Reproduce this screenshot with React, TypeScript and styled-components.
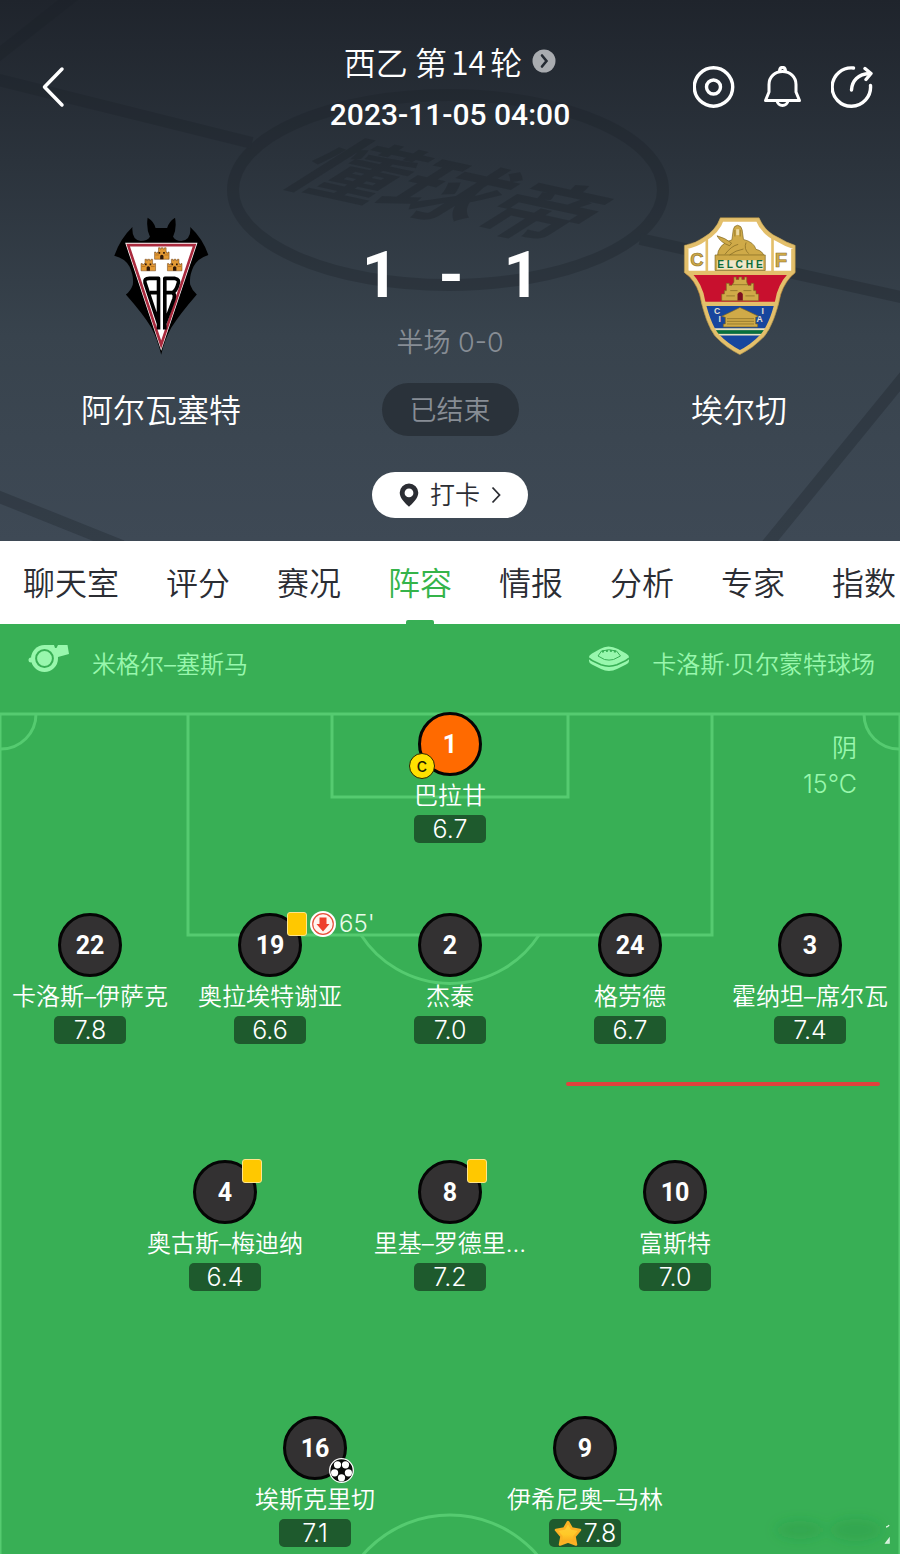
import React from "react";
import styled, { createGlobalStyle } from "styled-components";

const GlobalStyle = createGlobalStyle`
  *, *::before, *::after { box-sizing: border-box; }
  body {
    margin: 0;
    background: #38af55;
    font-family: Inter, "Noto Sans CJK SC", sans-serif;
    font-weight: 350;
    -webkit-font-smoothing: antialiased;
  }
  button { font: inherit; color: inherit; border: 0; padding: 0; background: none; cursor: pointer; }
  a { color: inherit; text-decoration: none; }
  h1, h2, p { margin: 0; font-size: inherit; font-weight: inherit; }
  svg { display: block; }
`;

const Page = styled.main`
  width: 100%;
  overflow: hidden;
`;

/* ---------- header ---------- */

const Header = styled.header`
  position: relative;
  padding: 42px 0 23px;
  color: #fff;
  background: linear-gradient(#1f242c 0%, #2b333c 30%, #38434d 62%, #3e4955 100%);
`;

const HeaderArt = styled.svg`
  position: absolute;
  inset: 0;
  width: 100%;
  height: 100%;
`;

const TopBar = styled.div`
  position: relative;
  display: grid;
  grid-template-columns: 1fr auto 1fr;
  align-items: center;
  padding: 0 27px 0 40px;
`;

const Round = styled.a`
  display: flex;
  align-items: center;
  justify-content: center;
  gap: 10px;
  font-size: 32px;
  line-height: 38px;
  font-family: "Noto Sans CJK SC", sans-serif;
`;

const RoundNumber = styled.span`
  padding: 0 4px;
`;

const Kickoff = styled.time`
  display: block;
  margin-top: 15px;
  font: 500 30px/40px Roboto, sans-serif;
  text-align: center;
`;

const Titles = styled.div`
  padding-right: 13px;
`;

const Actions = styled.div`
  display: flex;
  justify-content: flex-end;
  gap: 27px;
  padding-bottom: 4px;
`;

const Match = styled.section`
  position: relative;
  display: grid;
  grid-template-columns: 1fr 256px 1fr;
  margin-top: 82px;
`;

const Team = styled.div`
  display: flex;
  flex-direction: column;
  align-items: center;
  gap: 32px;
  font-size: 32px;
  line-height: 48px;
`;

const Center = styled.div`
  display: flex;
  flex-direction: column;
  align-items: center;
  padding-top: 27px;
`;

const Score = styled.div`
  display: flex;
  gap: 40px;
  padding-left: 2px;
  font: 700 64px/64px Roboto, sans-serif;
`;

const HalfTime = styled.p`
  margin-top: 17px;
  font-size: 27px;
  line-height: 36px;
  color: #878d95;
`;

const Status = styled.span`
  margin-top: 22px;
  padding: 3px 28px 0;
  border-radius: 27px;
  background: #2a323a;
  color: #878d95;
  font-size: 27px;
  line-height: 50px;
`;

const CheckIn = styled.button`
  display: flex;
  align-items: center;
  gap: 11px;
  height: 46px;
  margin-top: 36px;
  padding: 0 27px;
  border-radius: 23px;
  background: #fff;
  color: #2b2d33;
  font-size: 25px;
  line-height: 46px;
`;

/* ---------- tabs ---------- */

const Tabs = styled.nav`
  display: flex;
  gap: 47px;
  height: 83px;
  padding-left: 23px;
  background: #fff;
`;

const Tab = styled.a<{ $active?: boolean }>`
  position: relative;
  flex: none;
  padding-top: 2px;
  font-size: 32px;
  line-height: 81px;
  color: ${(p) => (p.$active ? "#35b44a" : "#2b2d33")};

  &::after {
    content: "";
    display: ${(p) => (p.$active ? "block" : "none")};
    position: absolute;
    bottom: 0;
    left: 50%;
    width: 28px;
    height: 4px;
    margin-left: -14px;
    border-radius: 2px 2px 0 0;
    background: #38af55;
  }
`;

/* ---------- pitch ---------- */

const Info = styled.div`
  display: flex;
  justify-content: space-between;
  height: 88px;
  padding: 20px 25px 0 28px;
  background: #38af55;
  color: #98f7ad;
`;

const InfoItem = styled.div`
  display: flex;
  align-items: flex-start;
  gap: 22px;
`;

const InfoText = styled.span`
  padding-top: 5px;
  font-size: 24px;
  line-height: 32px;
`;

const Pitch = styled.section`
  position: relative;
  padding-bottom: 7px;
  background: #38af55;
`;

const PitchLines = styled.svg`
  position: absolute;
  inset: 0;
  width: 100%;
  height: 100%;
`;

const Weather = styled.div`
  position: absolute;
  top: 18px;
  right: 43px;
  font-size: 25px;
  line-height: 36px;
  text-align: right;
  color: #98f7ad;
`;

const Row = styled.div<{ $gap: number }>`
  position: relative;
  display: flex;
  justify-content: center;
  padding-top: ${(p) => p.$gap}px;
`;

const Slot = styled.div<{ $share: number }>`
  flex: 0 0 ${(p) => p.$share}%;
  display: flex;
  flex-direction: column;
  align-items: center;
`;

const Shirt = styled.div<{ $keeper?: boolean }>`
  position: relative;
  width: 64px;
  height: 64px;
  border: 3px solid #050505;
  border-radius: 50%;
  background: ${(p) => (p.$keeper ? "#ff6a00" : "#333132")};
  color: #fff;
  font: 700 25px/60px Roboto, sans-serif;
  text-align: center;
`;

const Name = styled.div`
  max-width: 162px;
  margin-top: 4px;
  overflow: hidden;
  white-space: nowrap;
  text-overflow: ellipsis;
  color: #fff;
  font-size: 24px;
  line-height: 32px;
`;

const Rating = styled.div`
  display: flex;
  align-items: center;
  justify-content: center;
  gap: 2px;
  width: 72px;
  height: 28px;
  margin-top: 3px;
  border-radius: 5px;
  background: #1e5a2d;
  color: #fff;
  font-size: 25px;
  line-height: 28px;
  font-weight: 300;
`;

const Events = styled.div`
  position: absolute;
  top: -5px;
  left: 46px;
  display: flex;
  align-items: center;
  gap: 3px;
  height: 26px;
`;

const Card = styled.span`
  width: 20px;
  height: 24px;
  border: 1px solid #ffe58a;
  border-radius: 3px;
  background: #ffc800;
`;

const Minute = styled.span`
  color: #e9fbe9;
  font: 300 24px/26px Inter, sans-serif;
`;

const Captain = styled.span`
  position: absolute;
  top: 38px;
  left: -12px;
  width: 26px;
  height: 26px;
  border: 1px solid #2a2600;
  border-radius: 50%;
  background: #ffe100;
  color: #1c1a00;
  font: 400 19px/23px Inter, sans-serif;
`;

const Goal = styled.span`
  position: absolute;
  top: 39px;
  left: 43px;
`;

/* ---------- drawings ---------- */

const HeaderBackdrop = () => (
  <HeaderArt viewBox="0 0 900 541" preserveAspectRatio="xMidYMin slice" aria-hidden="true">
    <g fill="none" stroke="#1a2027" opacity="0.3" strokeWidth="12">
      <ellipse cx="448" cy="190" rx="215" ry="95" />
      <path d="M-5 79 252 143M640 239 905 298" />
      <path d="M78 -8-8 60M-8 494 122 546M908 372 766 546" />
    </g>
    <text
      transform="matrix(1.02 .22 -.95 .6 276 182)"
      fontSize="92"
      fontWeight="700"
      fontFamily="Noto Sans CJK SC, sans-serif"
      fill="#1a2027"
      fillOpacity="0.34"
    >
      懂球帝
    </text>
  </HeaderArt>
);

const Castle = ({ x, y }: { x: number; y: number }) => (
  <g transform={`translate(${x} ${y})`}>
    <path
      d="M0 13h4v3h5v-3h3V0h5v4h3V0h6v4h4V0h5v13h2v3h4v-3h3v22H0z"
      fill="#e39a35"
      stroke="#6b3c10"
      strokeWidth="1.5"
    />
    <path d="M17 35V24q5-6 10 0v11zM12 13h5v5h-5zM26 13h5v5h-5z" fill="#2b1508" />
    <path d="M2 22h11M30 22h11" stroke="#a8641c" strokeWidth="2" />
  </g>
);

const AlbaceteCrest = () => (
  <svg width="97" height="138" viewBox="70 35 290 418" role="img" aria-label="阿尔瓦塞特">
    <path
      d="M173 37Q192 48 197 68H232Q238 48 256 37 262 70 250 95 258 108 275 108 306 104 302 65 340 100 357 150 325 160 312 185 298 215 302 240 308 258 322 270 270 330 245 370 225 405 214 452 203 405 184 370 160 330 107 270 122 258 128 240 132 215 118 185 105 160 72 152 90 100 127 65 124 104 152 108 172 108 180 95 168 70 173 37z"
      fill="#000"
    />
    <path d="M105 113h219L214 440z" fill="#fff" />
    <path d="M114 120h201L214 422z" fill="#fff" stroke="#aa2a3e" strokeWidth="8" />
    <Castle x={194} y={128} />
    <Castle x={153} y={163} />
    <Castle x={233} y={163} />
    <g fill="none" stroke="#000" strokeWidth="11" strokeLinejoin="round">
      <path d="M206 376V221H178q-17 0-13 13L206 358M180 264h26" />
      <path d="M225 376V221h31q15 3 9 17-5 20-16 26h-24M249 264q8 5 4 18L226 356" />
    </g>
  </svg>
);

const ELCHE_SHIELD =
  "M162 37h117q17 42 58 60 26 16 52 24v82q-30 24-44 66-18 88-50 128-34 36-74 55-42-21-74-55-30-38-48-128-14-44-46-66v-82q34-6 58-24 38-22 51-60z";

const ElcheCrest = () => (
  <svg width="113" height="138" viewBox="50 35 340 418" role="img" aria-label="埃尔切">
    <defs>
      <clipPath id="shield">
        <path d={ELCHE_SHIELD} />
      </clipPath>
    </defs>
    <g clipPath="url(#shield)">
      <path d="M50 35h340v170H50z" fill="#fff" />
      <path d="M50 205h340v90H50z" fill="#c8102e" />
      <path d="M50 298h340v155H50z" fill="#17469e" />
      <path d="M50 372h340v7H50zM50 388h340v6H50z" fill="#e8e2c0" />
      <path d="M50 378h340v11H50z" fill="#08703a" />
      <path d="M50 204h340M50 298h340" stroke="#e3bf6b" strokeWidth="13" />
      <path d="M121 80v124M320 80v124" stroke="#e3bf6b" strokeWidth="8" />
    </g>
    <path d={ELCHE_SHIELD} fill="none" stroke="#e3bf6b" strokeWidth="25" clipPath="url(#shield)" />
    <path d={ELCHE_SHIELD} fill="none" stroke="#a98a3d" strokeWidth="2" />
    <g fill="#cfaa48" stroke="#7d6420" strokeWidth="2">
      <path d="M153 156q0-38 44-52l4-30q2-13 13-14 12 1 14 14l4 29q32 8 38 30 20 4 26 23z" />
      <path d="M190 122q-28-10-38-30 24 6 44 22z" />
      <path d="M146 150h152v47H146z" />
      <path d="M203 217h7v7h8v-7h9v7h8v-7h7v15l4 10h9v-6h8v22h7v10h8v21H166v-21h8v-10h6v-22h9v6h8l6-10z" />
      <path d="M166 336l35-17 20-10 22 10 35 17-9 3v20h6v9H171v-9h6v-20z" />
    </g>
    <path d="M152 166h140v28H152z" fill="#efe6c8" />
    <path d="M214 288v-20q8-12 16 0v20z" fill="#7d1020" />
    <path
      d="M176 148q20-26 40-30M190 150q18-14 42-18M240 112q-8 20 8 34M206 74v20M222 74v20M182 343h82M182 351h82M182 359h82M192 258h22M232 258h24M180 274h26M238 274h28M200 240h44"
      fill="none"
      stroke="#7d6420"
      strokeWidth="2"
    />
    <path d="M210 72h9v18h-9z" fill="#ecd9a0" />
    <g fontFamily="Liberation Sans, sans-serif" fontWeight="700" textAnchor="middle">
      <text x="91" y="183" fontSize="56" fill="#cfaa48" stroke="#8f7430" strokeWidth="2">C</text>
      <text x="346" y="187" fontSize="62" fill="#cfaa48" stroke="#8f7430" strokeWidth="2">F</text>
      <g fontSize="31" fill="#0d6b38">
        <text x="163" y="191">E</text>
        <text x="191" y="191">L</text>
        <text x="219" y="191">C</text>
        <text x="250" y="191">H</text>
        <text x="280" y="191">E</text>
      </g>
      <g fontSize="26" fill="#e6e0d0">
        <text x="152" y="329">C</text>
        <text x="160" y="352">I</text>
        <text x="290" y="329">I</text>
        <text x="281" y="352">A</text>
      </g>
    </g>
  </svg>
);

const BackIcon = () => (
  <svg width="26" height="42" viewBox="0 0 26 42" fill="none" stroke="#fff" strokeWidth="3.5">
    <path d="M22 3 4.500 21 22 39" strokeLinecap="round" strokeLinejoin="round" />
  </svg>
);

const RoundIcon = () => (
  <svg width="24" height="24" viewBox="0 0 24 24" aria-hidden="true">
    <circle cx="12" cy="12" r="11.500" fill="#a9acb0" />
    <path d="M10 6.500 14.500 12 10 17.500" fill="none" stroke="#252b33" strokeWidth="2.600" strokeLinecap="round" />
  </svg>
);

const TargetIcon = () => (
  <svg width="42" height="42" viewBox="0 0 42 42" fill="none" stroke="#fff" strokeWidth="3.400">
    <circle cx="20.500" cy="21" r="19.200" />
    <circle cx="20.500" cy="21" r="7" />
  </svg>
);

const BellIcon = () => (
  <svg width="42" height="42" viewBox="0 0 42 42" fill="none" stroke="#fff" strokeWidth="3" strokeLinejoin="round">
    <path d="M7 26V18.500C7 11 13 5.500 20.500 5.500S34 11 34 18.500V26l3.500 8.500h-34z" />
    <path d="M17.500 5.500c0-5.500 6-5.500 6 0M15 34.500c.5 6.500 10.500 6.500 11 0" />
  </svg>
);

const ShareIcon = () => (
  <svg width="42" height="42" viewBox="0 0 42 42" fill="none" stroke="#fff" strokeWidth="3.400" strokeLinecap="round">
    <path d="M22.500 2A19.200 19.200 0 1 0 39.500 19.500" />
    <path d="M20.500 24C21 15 27 8 38.500 7.500" />
    <path d="M34 2.500 40 7.500 35 13.500" strokeLinejoin="round" />
  </svg>
);

const PinIcon = () => (
  <svg width="20" height="24" viewBox="0 0 20 24" aria-hidden="true">
    <path
      fillRule="evenodd"
      fill="#2b2d33"
      d="M10 .5a9.300 9.300 0 0 1 9.300 9.300C19.300 15.500 13 21 10 23.800 7 21 .7 15.500.7 9.800A9.300 9.300 0 0 1 10 .5zm0 5a4.400 4.400 0 1 0 0 8.800 4.400 4.400 0 0 0 0-8.800z"
    />
  </svg>
);

const ChevronIcon = () => (
  <svg width="10" height="18" viewBox="0 0 10 18" fill="none" stroke="#2b2d33" strokeWidth="1.800">
    <path d="M1.500 1.500 8.500 9 1.500 16.500" />
  </svg>
);

const WhistleIcon = () => (
  <svg width="42" height="32" viewBox="0 0 42 32" aria-hidden="true">
    <g fill="#98f7ad">
      <circle cx="16.500" cy="14.500" r="13.500" />
      <path d="M16 1h10l1 3h1.500L30 1h9.500L41 10 30 13 26 21z" />
      <circle cx="3" cy="16" r="2.500" />
    </g>
    <circle cx="16.500" cy="14.500" r="8.400" fill="none" stroke="#38af55" strokeWidth="2" />
  </svg>
);

const StadiumIcon = () => (
  <svg width="42" height="32" viewBox="0 0 42 32" aria-hidden="true">
    <path
      d="M1 13q0-2 3-3.500L12 5q8-5 18 0l8 4.500q3 1.500 3 3.500v4q0 2-3 3.500L29 25q-8 4-16 0L4 20.500Q1 19 1 17z"
      fill="#98f7ad"
    />
    <path d="M1 14q1 1.500 4 3l8 3.800q8 2.800 16 0l8-3.800q3-1.500 4-3" fill="none" stroke="#38af55" strokeWidth="1.500" />
    <path d="M10 12l3.500-5q7.500-2.500 15 0l4 5-7 3.500q-4.500 1.200-9 0z" fill="none" stroke="#38af55" strokeWidth="1" />
    <path d="M14 7.800q7-2 14 0" fill="none" stroke="#38af55" strokeWidth="2" strokeDasharray="2 2" />
  </svg>
);

const SubOffIcon = () => (
  <svg width="26" height="26" viewBox="0 0 26 26" role="img" aria-label="换下">
    <circle cx="13" cy="13" r="13" fill="#fff" />
    <circle cx="13" cy="13" r="10.300" fill="#fff4ef" stroke="#e8503c" strokeWidth="1.200" />
    <path d="M9.500 6.500h7V13h3L13 20.500 6.500 13h3z" fill="#ee3f2c" />
  </svg>
);

const BallIcon = () => (
  <svg width="25" height="25" viewBox="0 0 25 25" role="img" aria-label="进球">
    <circle cx="12.500" cy="12.500" r="11.800" fill="#0a0a0a" stroke="#fff" strokeWidth="1.300" />
    <g fill="#fff">
      <circle cx="8.500" cy="6.800" r="3.600" />
      <circle cx="16.500" cy="6.800" r="3.600" />
      <circle cx="5.600" cy="14.800" r="3.600" />
      <circle cx="19.400" cy="14.800" r="3.600" />
      <circle cx="12.500" cy="19.800" r="3.600" />
    </g>
    <path d="M12.500 9 16 11.600 14.700 15.600H10.300L9 11.600z" fill="#0a0a0a" />
  </svg>
);

const StarIcon = () => (
  <svg width="28" height="26" viewBox="0 0 28 26" role="img" aria-label="最佳">
    <defs>
      <linearGradient id="star" x1="0" y1="0" x2="0" y2="1">
        <stop offset="0" stopColor="#ffcf3a" />
        <stop offset="0.550" stopColor="#ffc928" />
        <stop offset="1" stopColor="#f9a01b" />
      </linearGradient>
    </defs>
    <path
      d="M14 2 17.800 8.500l8.200 1.500-5.500 6.500 1.500 8L14 21.500 6 24.500l1.500-8L2 10l8.200-1.500z"
      fill="url(#star)"
      stroke="#fbb224"
      strokeWidth="2.500"
      strokeLinejoin="round"
    />
  </svg>
);

const FieldMarkings = () => (
  <PitchLines viewBox="0 0 900 842" preserveAspectRatio="xMidYMin slice" aria-hidden="true">
    <defs>
      <filter id="smear" x="-20%" y="-80%" width="140%" height="260%">
        <feGaussianBlur stdDeviation="6" />
      </filter>
    </defs>
    <g fill="none" stroke="#55cb70" strokeWidth="3">
      <path d="M0 850V2h900v848" />
      <path d="M188 2v221h524V2M332 2v83h236V2" />
      <path d="M361 223a106 106 0 0 0 178 0" />
      <path d="M36 2A35 35 0 0 1 1 37M864 2a35 35 0 0 0 35 35" />
      <circle cx="450" cy="918" r="115" />
    </g>
    <path d="M568 372H878" stroke="#e0423c" strokeWidth="4" strokeLinecap="round" />
    <g fill="#1f8a3e" fillOpacity="0.25" filter="url(#smear)">
      <ellipse cx="800" cy="818" rx="24" ry="9" />
      <ellipse cx="856" cy="818" rx="26" ry="11" />
    </g>
    <path d="M889 813q-1 2-3 2M886 831l3-4v4z" fill="none" stroke="#dff5e3" strokeWidth="1.500" />
  </PitchLines>
);

/* ---------- data ---------- */

type Player = {
  number: number;
  name: string;
  rating: string;
  keeper?: boolean;
  captain?: boolean;
  booked?: boolean;
  off?: string;
  scored?: boolean;
  best?: boolean;
};

type Line = { gap: number; share: number; players: Player[] };

const LINES: Line[] = [
  { gap: 0, share: 20, players: [{ number: 1, name: "巴拉甘", rating: "6.7", keeper: true, captain: true }] },
  {
    gap: 70,
    share: 20,
    players: [
      { number: 22, name: "卡洛斯–伊萨克", rating: "7.8" },
      { number: 19, name: "奥拉埃特谢亚", rating: "6.6", booked: true, off: "65'" },
      { number: 2, name: "杰泰", rating: "7.0" },
      { number: 24, name: "格劳德", rating: "6.7" },
      { number: 3, name: "霍纳坦–席尔瓦", rating: "7.4" },
    ],
  },
  {
    gap: 116,
    share: 25,
    players: [
      { number: 4, name: "奥古斯–梅迪纳", rating: "6.4", booked: true },
      { number: 8, name: "里基–罗德里…", rating: "7.2", booked: true },
      { number: 10, name: "富斯特", rating: "7.0" },
    ],
  },
  {
    gap: 125,
    share: 30,
    players: [
      { number: 16, name: "埃斯克里切", rating: "7.1", scored: true },
      { number: 9, name: "伊希尼奥–马林", rating: "7.8", best: true },
    ],
  },
];

const TABS = ["聊天室", "评分", "赛况", "阵容", "情报", "分析", "专家", "指数"];

const PlayerSlot = ({ player, share }: { player: Player; share: number }) => (
  <Slot $share={share}>
    <Shirt $keeper={player.keeper}>
      {player.number}
      {player.captain && <Captain>c</Captain>}
      {player.booked && (
        <Events>
          <Card />
          {player.off && (
            <>
              <SubOffIcon />
              <Minute>{player.off}</Minute>
            </>
          )}
        </Events>
      )}
      {player.scored && (
        <Goal>
          <BallIcon />
        </Goal>
      )}
    </Shirt>
    <Name>{player.name}</Name>
    <Rating>
      {player.best && <StarIcon />}
      {player.rating}
    </Rating>
  </Slot>
);

export default function App() {
  return (
    <Page>
      <GlobalStyle />
      <Header>
        <HeaderBackdrop />
        <TopBar>
          <div>
            <button type="button" aria-label="返回">
              <BackIcon />
            </button>
          </div>
          <Titles>
            <Round href="#round">
              <span>
                西乙 第<RoundNumber>14</RoundNumber>轮
              </span>
              <RoundIcon />
            </Round>
            <Kickoff dateTime="2023-11-05T04:00">2023-11-05 04:00</Kickoff>
          </Titles>
          <Actions>
            <button type="button" aria-label="直播">
              <TargetIcon />
            </button>
            <button type="button" aria-label="提醒">
              <BellIcon />
            </button>
            <button type="button" aria-label="分享">
              <ShareIcon />
            </button>
          </Actions>
        </TopBar>
        <Match>
          <Team>
            <AlbaceteCrest />
            <h2>阿尔瓦塞特</h2>
          </Team>
          <Center>
            <Score>
              <span>1</span>
              <span>-</span>
              <span>1</span>
            </Score>
            <HalfTime>半场 0-0</HalfTime>
            <Status>已结束</Status>
            <CheckIn type="button">
              <PinIcon />
              打卡
              <ChevronIcon />
            </CheckIn>
          </Center>
          <Team>
            <ElcheCrest />
            <h2>埃尔切</h2>
          </Team>
        </Match>
      </Header>
      <Tabs>
        {TABS.map((tab) => (
          <Tab key={tab} href={`#${tab}`} $active={tab === "阵容"}>
            {tab}
          </Tab>
        ))}
      </Tabs>
      <Info>
        <InfoItem>
          <WhistleIcon />
          <InfoText>米格尔–塞斯马</InfoText>
        </InfoItem>
        <InfoItem>
          <StadiumIcon />
          <InfoText>卡洛斯·贝尔蒙特球场</InfoText>
        </InfoItem>
      </Info>
      <Pitch>
        <FieldMarkings />
        <Weather>
          <p>阴</p>
          <p>15°C</p>
        </Weather>
        {LINES.map((line) => (
          <Row key={line.gap} $gap={line.gap}>
            {line.players.map((player) => (
              <PlayerSlot key={player.number} player={player} share={line.share} />
            ))}
          </Row>
        ))}
      </Pitch>
    </Page>
  );
}
